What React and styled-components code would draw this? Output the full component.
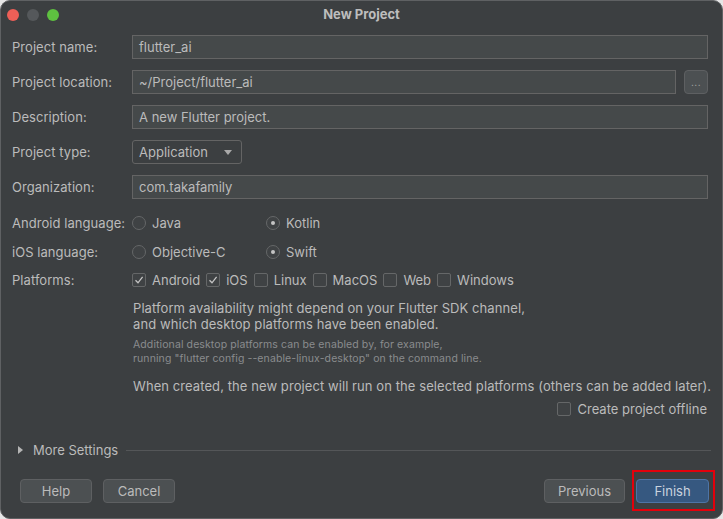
import React from "react";
import styled, { createGlobalStyle } from "styled-components";

const Global = createGlobalStyle`
  html, body { margin: 0; padding: 0; background: #e6e6e6; }
  body { width: 723px; height: 519px; overflow: hidden; font-family: Inter, "Noto Sans", sans-serif; }
  * { box-sizing: border-box; }
`;

const Window = styled.div`
  width: 723px;
  height: 519px;
  background: #3c3f41;
  border: 1px solid #5f6163;
  border-radius: 10px;
  display: flex;
  flex-direction: column;
  color: #bbbbbb;
  font-size: 13px;
  overflow: hidden;
`;

const TitleBar = styled.div`
  height: 27px;
  display: flex;
  align-items: center;
  position: relative;
  padding-left: 6px;
  gap: 8px;
`;

const Light = styled.span`
  width: 12px;
  height: 12px;
  border-radius: 50%;
  background: ${(p) => p.$c};
`;

const Title = styled.div`
  position: absolute;
  left: 0;
  right: 0;
  top: 0;
  line-height: 27px;
  text-align: center;
  font-weight: 700;
  font-size: 13px;
  color: #bdbdbd;
  pointer-events: none;
`;

const Form = styled.div`
  display: flex;
  flex-direction: column;
  padding: 7px 14px 0 11px;
`;

const Row = styled.div`
  display: flex;
  align-items: center;
  height: ${(p) => p.$h || 24}px;
  margin-top: ${(p) => p.$mt || 0}px;
`;

const Label = styled.div`
  width: 120px;
  flex: none;
  white-space: nowrap;
  letter-spacing: 0.05px;
`;

const Input = styled.div`
  flex: 1;
  height: 24px;
  background: #45494a;
  border: 1px solid #646464;
  padding: 0 6px;
  display: flex;
  align-items: center;
  color: #bbbbbb;
`;

const BrowseBtn = styled.div`
  width: 24px;
  height: 24px;
  margin-left: 8px;
  border-radius: 4px;
  background: #4c5052;
  border: 1px solid #5e6062;
  display: flex;
  align-items: center;
  justify-content: center;
  font-size: 10px;
  letter-spacing: 0.5px;
  padding-bottom: 1px;
  color: #a8a8a8;
`;

const Select = styled.div`
  width: 110px;
  height: 24px;
  border: 1px solid #646464;
  border-radius: 3px;
  background: #3c3f41;
  padding: 0 6px;
  display: flex;
  align-items: center;
  justify-content: space-between;
`;

const Arrow = styled.span`
  width: 0;
  height: 0;
  border-left: 4.5px solid transparent;
  border-right: 4.5px solid transparent;
  border-top: 5px solid #a9a9a9;
  margin-right: 3px;
`;

const RadioCell = styled.div`
  width: ${(p) => p.$w || "auto"};
  display: flex;
  align-items: center;
  gap: 6px;
`;

const Radio = styled.span`
  width: 14px;
  height: 14px;
  border-radius: 50%;
  border: 1px solid #656768;
  background: #3f4244;
  display: flex;
  align-items: center;
  justify-content: center;
  &::after {
    content: "";
    width: 4px;
    height: 4px;
    border-radius: 50%;
    background: ${(p) => (p.$on ? "#c4c4c4" : "transparent")};
  }
`;

const Checks = styled.div`
  display: flex;
  align-items: center;
  gap: 6px;
`;

const CheckItem = styled.div`
  display: flex;
  align-items: center;
  gap: 6px;
  white-space: nowrap;
`;

const Box = styled.span`
  width: 14px;
  height: 14px;
  border-radius: 2px;
  border: 1px solid #656768;
  background: #3f4244;
  display: flex;
  align-items: center;
  justify-content: center;
`;

const Info = styled.div`
  margin-left: 121px;
  display: flex;
  flex-direction: column;
`;

const Para = styled.div`
  line-height: 16px;
  margin-top: ${(p) => p.$mt || 0}px;
  white-space: nowrap;
  letter-spacing: 0.08px;
`;

const Small = styled.div`
  font-size: 10.5px;
  line-height: 14px;
  color: #8a8c8e;
  margin-top: 6px;
  white-space: nowrap;
  letter-spacing: 0.1px;
`;

const OfflineRow = styled.div`
  display: flex;
  justify-content: flex-end;
  height: 20px;
  align-items: center;
  margin-top: 5px;
  padding-right: 1px;
`;

const MoreRow = styled.div`
  display: flex;
  align-items: center;
  height: 20px;
  margin-top: 21px;
  padding: 0 11px 0 17px;
`;

const Triangle = styled.span`
  width: 0;
  height: 0;
  border-top: 4px solid transparent;
  border-bottom: 4px solid transparent;
  border-left: 5px solid #b5b5b5;
  margin-right: 10px;
`;

const Rule = styled.span`
  flex: 1;
  height: 1px;
  background: #545658;
  margin-left: 8px;
`;

const Buttons = styled.div`
  display: flex;
  align-items: center;
  gap: 11px;
  margin-top: 19px;
  padding: 0 13px 0 19px;
`;

const Spacer = styled.div`
  flex: 1;
`;

const Button = styled.div`
  position: relative;
  width: ${(p) => p.$w}px;
  height: 24px;
  border-radius: 4px;
  border: 1px solid ${(p) => (p.$primary ? "#4d74a6" : "#5e6062")};
  background: ${(p) => (p.$primary ? "#365880" : "#4c5052")};
  color: ${(p) => (p.$primary ? "#c9d3df" : "#bbbbbb")};
  display: flex;
  align-items: center;
  justify-content: center;
`;

const Highlight = styled.span`
  position: absolute;
  left: -5px;
  right: -7px;
  top: -10px;
  bottom: -9px;
  border: 2px solid #e3000b;
  pointer-events: none;
`;

const Check = ({ on }) => (
  <Box>
    {on && (
      <svg width="10" height="10" viewBox="0 0 10 10">
        <path d="M1.5 5.2 L4 7.8 L8.6 1.8" fill="none" stroke="#c4c4c4" strokeWidth="1.3" />
      </svg>
    )}
  </Box>
);

const platforms = [
  ["Android", true],
  ["iOS", true],
  ["Linux", false],
  ["MacOS", false],
  ["Web", false],
  ["Windows", false],
];

export default function App() {
  return (
    <>
      <Global />
      <Window>
        <TitleBar>
          <Light $c="#ee5f57" />
          <Light $c="#55585b" />
          <Light $c="#5ec140" />
          <Title>New Project</Title>
        </TitleBar>
        <Form>
          <Row>
            <Label>Project name:</Label>
            <Input>flutter_ai</Input>
          </Row>
          <Row $mt={11}>
            <Label>Project location:</Label>
            <Input>~/Project/flutter_ai</Input>
            <BrowseBtn>...</BrowseBtn>
          </Row>
          <Row $mt={11}>
            <Label>Description:</Label>
            <Input>A new Flutter project.</Input>
          </Row>
          <Row $mt={11}>
            <Label>Project type:</Label>
            <Select>
              <span>Application</span>
              <Arrow />
            </Select>
          </Row>
          <Row $mt={11}>
            <Label>Organization:</Label>
            <Input>com.takafamily</Input>
          </Row>
          <Row $mt={14} $h={20}>
            <Label>Android language:</Label>
            <RadioCell $w="134px">
              <Radio />
              <span>Java</span>
            </RadioCell>
            <RadioCell>
              <Radio $on />
              <span>Kotlin</span>
            </RadioCell>
          </Row>
          <Row $mt={9} $h={20}>
            <Label>iOS language:</Label>
            <RadioCell $w="134px">
              <Radio />
              <span>Objective-C</span>
            </RadioCell>
            <RadioCell>
              <Radio $on />
              <span>Swift</span>
            </RadioCell>
          </Row>
          <Row $mt={8} $h={20}>
            <Label>Platforms:</Label>
            <Checks>
              {platforms.map(([name, on]) => (
                <CheckItem key={name}>
                  <Check on={on} />
                  <span>{name}</span>
                </CheckItem>
              ))}
            </Checks>
          </Row>
          <Info>
            <Para $mt={10}>
              Platform availability might depend on your Flutter SDK channel,
              <br />
              and which desktop platforms have been enabled.
            </Para>
            <Small>
              Additional desktop platforms can be enabled by, for example,
              <br />
              running "flutter config --enable-linux-desktop" on the command line.
            </Small>
            <Para $mt={12}>
              When created, the new project will run on the selected platforms (others can be added later).
            </Para>
          </Info>
          <OfflineRow>
            <CheckItem>
              <Check on={false} />
              <span>Create project offline</span>
            </CheckItem>
          </OfflineRow>
        </Form>
        <MoreRow>
          <Triangle />
          <span>More Settings</span>
          <Rule />
        </MoreRow>
        <Buttons>
          <Button $w={72}>Help</Button>
          <Button $w={72}>Cancel</Button>
          <Spacer />
          <Button $w={81}>Previous</Button>
          <Button $w={73} $primary>
            Finish
            <Highlight />
          </Button>
        </Buttons>
      </Window>
    </>
  );
}
